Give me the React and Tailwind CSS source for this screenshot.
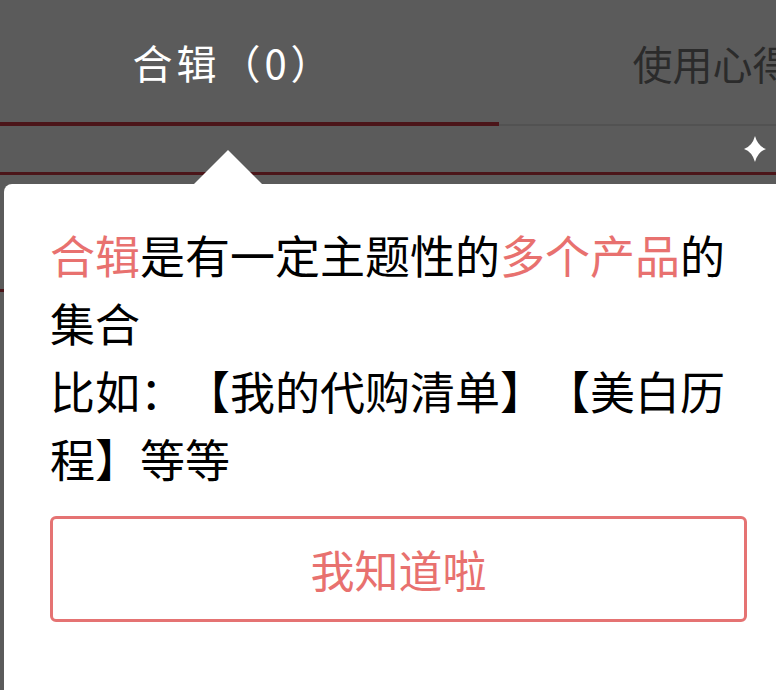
import React from "react";

const FONT = { fontFamily: '"Noto Sans CJK SC", "Noto Sans", sans-serif' };

function Sparkle() {
  return (
    <svg width="22" height="26" viewBox="0 0 22 26" aria-hidden="true">
      <path d="M11 0 Q13.8 10.2 22 13 Q13.8 15.8 11 26 Q8.2 15.8 0 13 Q8.2 10.2 11 0 Z" fill="#ffffff" />
    </svg>
  );
}

export default function App() {
  return (
    <div className="relative w-[776px] h-[690px] overflow-hidden bg-[#5b5b5b] [text-spacing-trim:space-all]" style={FONT}>
      {/* tabs */}
      <div className="flex w-[998px] h-[126px]">
        <div className="w-[499px] flex flex-col">
          <div className="flex-1 flex items-center justify-center pr-[32px] pt-[2px] text-[40px] tracking-[4px] text-white leading-none">
            合辑（0）
          </div>
          <div className="h-[4px] bg-[#4b1519]" />
        </div>
        <div className="w-[499px] flex flex-col">
          <div className="flex-1 flex items-center justify-center pl-[30px] pt-[2px] text-[40px] text-[#2b2b2b] leading-none">
            使用心得（0）
          </div>
          <div className="h-[2px] bg-[#525252]" />
        </div>
      </div>
      <div className="h-[46px] flex items-center justify-end pr-[10px]">
        <Sparkle />
      </div>
      <div className="h-[3px] bg-[#4b1519]" />
      <div className="h-[114px]" />
      <div className="h-[3px] bg-[#4b1519]" />

      {/* popup */}
      <div className="absolute left-[4px] top-[150px] flex flex-col">
        <svg width="68" height="34" viewBox="0 0 68 34" className="ml-[190px] block" aria-hidden="true">
          <polygon points="34,0 68,34 0,34" fill="#ffffff" />
        </svg>
        <div className="w-[820px] h-[540px] bg-white rounded-tl-[8px] pt-[37px] pl-[46px]">
          <div className="w-[697px]">
            <p className="text-[45px] leading-[68px] text-black break-all">
              <span className="text-[#e8716f]">合辑</span>是有一定主题性的<span className="text-[#e8716f]">多个产品</span>的集合
              <br />
              比如：【我的代购清单】【美白历程】等等
            </p>
            <button className="mt-[23px] w-[697px] h-[106px] border-[3px] border-[#e57373] rounded-[6px] bg-white text-[#e8716f] text-[44px] leading-none flex items-center justify-center">
              我知道啦
            </button>
          </div>
        </div>
      </div>
    </div>
  );
}
